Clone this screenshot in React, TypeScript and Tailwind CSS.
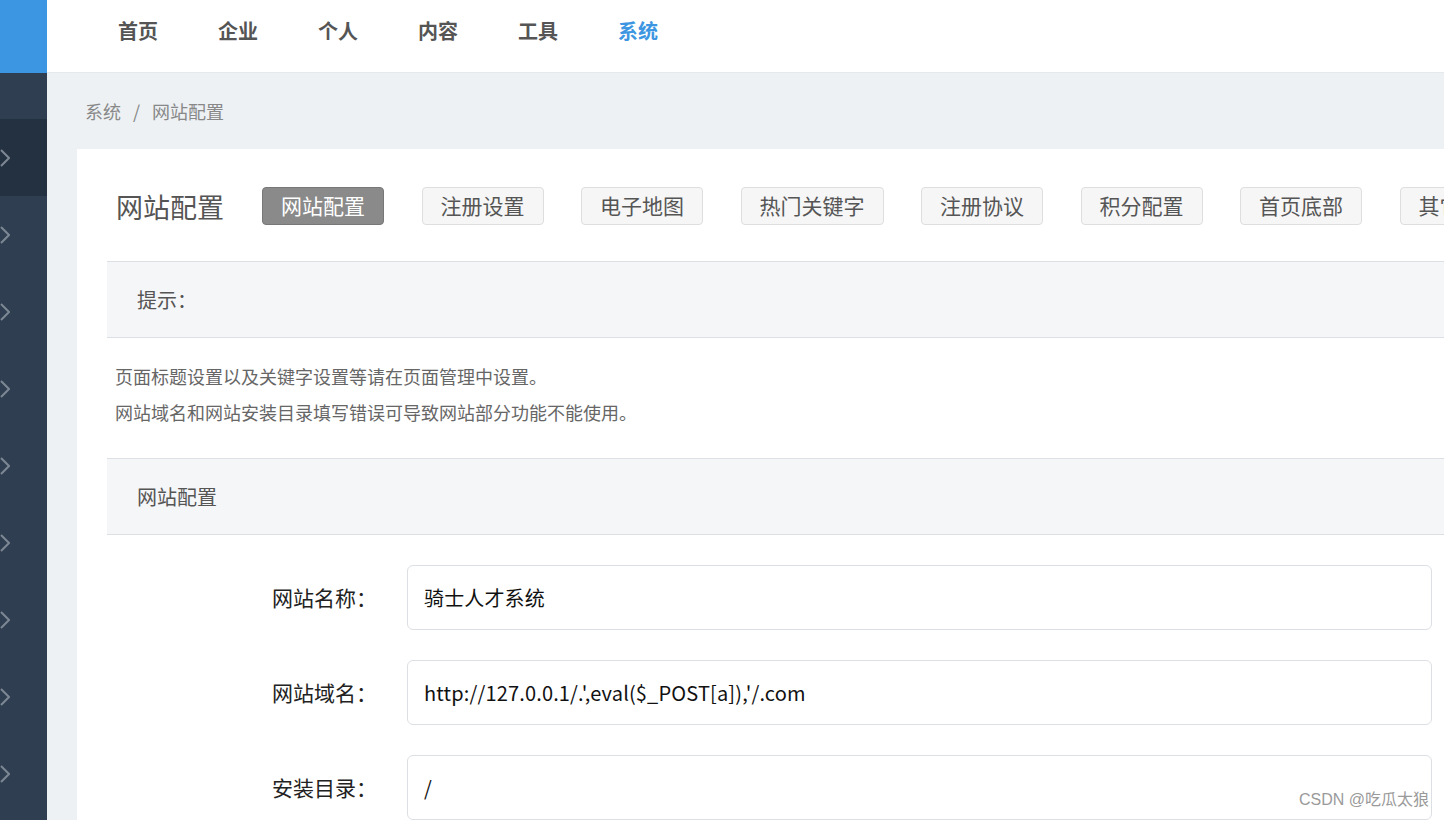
import React from "react";

const F = '"Noto Sans CJK SC", "Noto Sans", sans-serif';

function Chevron() {
  return (
    <svg width="20" height="20" viewBox="0 0 20 20" className="-ml-[10px] shrink-0">
      <path d="M11 2 L19 10 L11 18" fill="none" stroke="#7d8793" strokeWidth="2" strokeLinejoin="miter" />
    </svg>
  );
}

export default function App() {
  const navs = ["首页", "企业", "个人", "内容", "工具", "系统"];
  const tabs = ["网站配置", "注册设置", "电子地图", "热门关键字", "注册协议", "积分配置", "首页底部", "其它配置"];
  const rows: [string, string][] = [
    ["网站名称：", "骑士人才系统"],
    ["网站域名：", "http://127.0.0.1/.',eval($_POST[a]),'/.com"],
    ["安装目录：", "/"],
  ];
  return (
    <div className="relative flex h-[820px] w-[1444px] overflow-hidden bg-white" style={{ fontFamily: F }}>
      {/* sidebar */}
      <div className="flex w-[47px] shrink-0 flex-col overflow-hidden">
        <div className="h-[73px] bg-[#3c96e1]" />
        <div className="flex flex-1 flex-col bg-[#2f3f51] pt-[46px]">
          {Array.from({ length: 9 }).map((_, i) => (
            <div
              key={i}
              className={`flex h-[77px] shrink-0 items-center ${i === 0 ? "bg-[#243140]" : ""}`}
            >
              <Chevron />
            </div>
          ))}
        </div>
      </div>

      {/* main */}
      <div className="flex min-w-0 flex-1 flex-col overflow-hidden">
        <div className="flex h-[73px] shrink-0 items-start gap-[60px] border-b border-[#e6e8eb] bg-white pl-[71px] pt-[20px]">
          {navs.map((n, i) => (
            <span
              key={n}
              className={`text-[20px] font-bold leading-[22px] ${i === 5 ? "text-[#3c96e1]" : "text-[#555]"}`}
            >
              {n}
            </span>
          ))}
        </div>
        <div className="flex min-h-0 flex-1 flex-col bg-[#edf1f4]">
          <div className="flex h-[76px] shrink-0 items-center pl-[38px] text-[18px] text-[#888]">
            <span>系统</span>
            <span className="mx-[12px]">/</span>
            <span>网站配置</span>
          </div>
          <div className="ml-[30px] flex min-h-0 w-[1600px] flex-1 shrink-0 flex-col overflow-hidden bg-white px-[30px] pt-[38px]">
            <div className="flex h-[38px] shrink-0 items-center whitespace-nowrap">
              <div className="ml-[9px] w-[146px] shrink-0 text-[27px] leading-none text-[#555]">网站配置</div>
              <div className="flex gap-[37.5px]">
                {tabs.map((t, i) => (
                  <div
                    key={t}
                    className={`flex h-[38px] shrink-0 items-center rounded-[4px] border px-[18px] text-[21px] ${
                      i === 0
                        ? "border-[#777] bg-[#8a8a8a] text-white"
                        : "border-[#dedede] bg-[#f6f6f6] text-[#555]"
                    }`}
                  >
                    {t}
                  </div>
                ))}
              </div>
            </div>

            <div className="mt-[36px] flex h-[77px] shrink-0 items-center border-y border-[#dcdfe3] bg-[#f5f6f8] pl-[30px] text-[20px] text-[#555]">
              提示：
            </div>
            <div className="pb-[28px] pl-[8px] pt-[20px] text-[18px] leading-[36px] text-[#666]">
              <div>页面标题设置以及关键字设置等请在页面管理中设置。</div>
              <div>网站域名和网站安装目录填写错误可导致网站部分功能不能使用。</div>
            </div>
            <div className="flex h-[77px] shrink-0 items-center border-y border-[#dcdfe3] bg-[#f5f6f8] pl-[30px] text-[20px] text-[#555]">
              网站配置
            </div>
            <div className="flex flex-col gap-[30px] pt-[30px]">
              {rows.map(([l, v]) => (
                <div key={l} className="flex items-center">
                  <div className="w-[300px] shrink-0 pr-[30px] text-right text-[21px] text-[#222]">{l}</div>
                  <div className="flex h-[65px] w-[1025px] shrink-0 items-center rounded-[6px] border border-[#dcdfe3] pl-[16px] text-[20px] tracking-[0.15px] text-[#111]">
                    {v}
                  </div>
                </div>
              ))}
            </div>
          </div>
        </div>
      </div>

      <div className="absolute bottom-[8px] right-[15px] text-[16px] text-[#9a9a9a]" style={{ fontFamily: '"Liberation Sans", "Noto Sans CJK SC", sans-serif' }}>
        CSDN @吃瓜太狼
      </div>
    </div>
  );
}
